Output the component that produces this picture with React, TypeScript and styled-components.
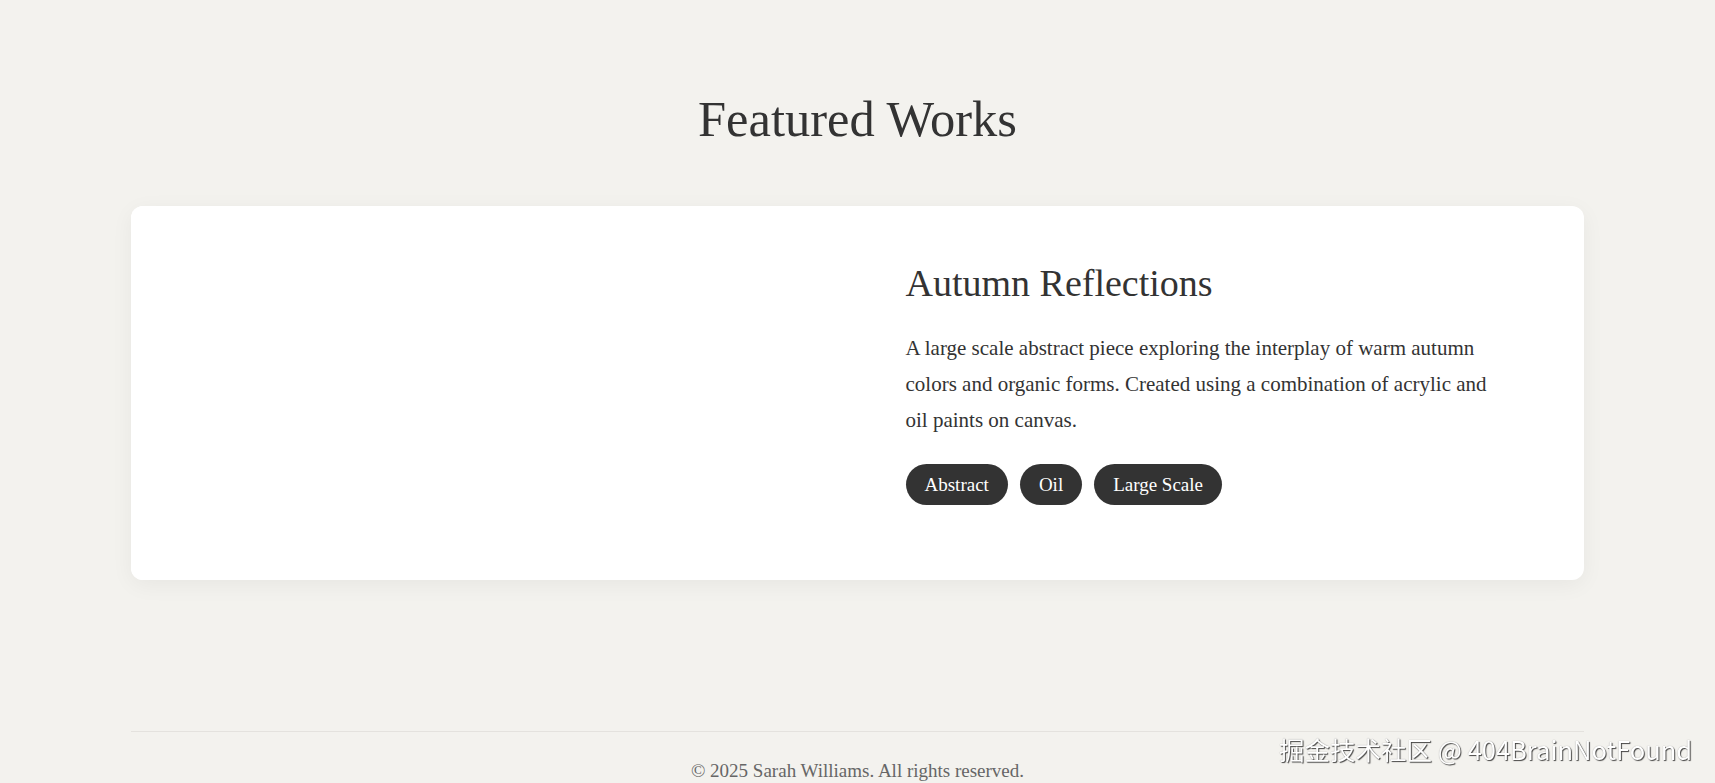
import styled, { createGlobalStyle } from 'styled-components';

const GlobalStyle = createGlobalStyle`
  * {
    box-sizing: border-box;
  }

  body {
    margin: 0;
    background: #f3f2ee;
    color: #333;
    font-family: "Liberation Serif", Georgia, serif;
  }
`;

const Page = styled.div`
  min-height: 100vh;
`;

const Container = styled.div`
  max-width: 1453px;
  margin: 0 auto;
`;

const WorksSection = styled.section`
  padding-top: 89px;
`;

const SectionTitle = styled.h2`
  margin: 0 0 56px;
  font-size: 50.5px;
  font-weight: 400;
  line-height: 1.2;
  text-align: center;
  color: #333;
`;

const WorkCard = styled.article`
  display: grid;
  grid-template-columns: 1fr 1fr;
  background: #fff;
  border-radius: 12px;
  box-shadow: 0 5px 22px rgba(0, 0, 0, 0.05);
  overflow: hidden;
`;

const WorkImage = styled.div`
  height: 374px;
  background: #fff;
`;

const WorkInfo = styled.div`
  display: flex;
  flex-direction: column;
  padding: 55px 48px 48px;
`;

const WorkTitle = styled.h3`
  margin: 0 0 24px;
  font-size: 38px;
  font-weight: 400;
  line-height: 1.2;
`;

const WorkText = styled.p`
  max-width: 590px;
  margin: 0 0 26px;
  font-size: 21px;
  line-height: 36px;
`;

const TagRow = styled.div`
  display: flex;
  flex-wrap: wrap;
  gap: 12px;
`;

const Tag = styled.span`
  padding: 8px 19px;
  border-radius: 22px;
  background: #333;
  color: #fff;
  font-size: 19px;
  line-height: 25px;
`;

const Footer = styled.footer`
  margin-top: 151px;
  padding: 24px 0 0;
  border-top: 1px solid #e4e2de;
  text-align: center;
  color: #666;
  font-size: 19px;
  line-height: 30px;
`;

const Watermark = styled.div`
  position: fixed;
  right: 23px;
  bottom: 22px;
  font-family: "Noto Sans CJK SC", "Noto Sans", sans-serif;
  font-size: 25.5px;
  line-height: 1;
  color: #fff;
  text-shadow: 1px 1px 1px rgba(0, 0, 0, 0.7), 0 0 1px rgba(0, 0, 0, 0.4);
  pointer-events: none;
`;

const tags = ['Abstract', 'Oil', 'Large Scale'];

function App() {
  return (
    <Page>
      <GlobalStyle />
      <WorksSection>
        <Container>
          <SectionTitle>Featured Works</SectionTitle>
          <WorkCard>
            <WorkImage />
            <WorkInfo>
              <WorkTitle>Autumn Reflections</WorkTitle>
              <WorkText>
                A large scale abstract piece exploring the interplay of warm autumn
                colors and organic forms. Created using a combination of acrylic and
                oil paints on canvas.
              </WorkText>
              <TagRow>
                {tags.map((t) => (
                  <Tag key={t}>{t}</Tag>
                ))}
              </TagRow>
            </WorkInfo>
          </WorkCard>
          <Footer>© 2025 Sarah Williams. All rights reserved.</Footer>
        </Container>
      </WorksSection>
      <Watermark>掘金技术社区 @ 404BrainNotFound</Watermark>
    </Page>
  );
}

export default App;
